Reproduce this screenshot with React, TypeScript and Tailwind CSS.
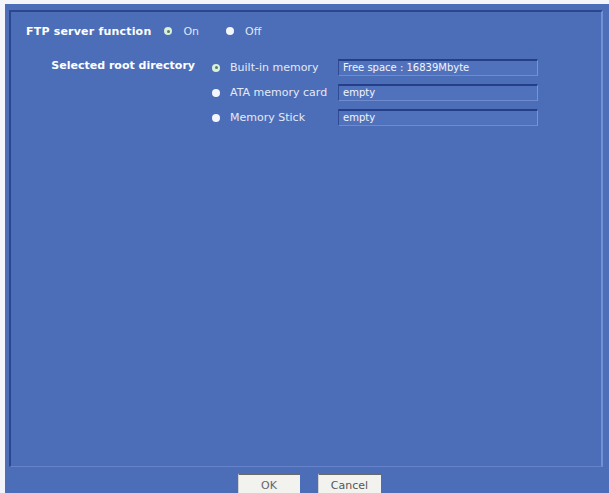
import { FC } from 'react';

type RadioProps = {
    checked?: boolean
}

// Small round option marker: a light ring when chosen, a plain white dot otherwise.
const Radio: FC<RadioProps> = ({ checked }) => (
    checked ? (
        <span className="flex items-center justify-center w-[8px] h-[8px] rounded-full bg-[#dcefd8] shrink-0">
            <span className="w-[3px] h-[3px] rounded-full bg-[#4f8268]" />
        </span>
    ) : (
        <span className="block w-[8px] h-[8px] rounded-full bg-[#f4f6fb] shrink-0" />
    )
);

type MemoryRowProps = {
    label: string,
    value: string,
    checked?: boolean
}

const MemoryRow: FC<MemoryRowProps> = ({ label, value, checked }) => (
    <div className="flex items-center h-[25px]">
        <Radio checked={checked} />
        <span className="ml-[10px] w-[108px] whitespace-nowrap text-[#e4e9f6]">{label}</span>
        <div className="w-[200px] h-[17px] flex items-center pl-[4px] bg-[#5072bd] border-t-2 border-l border-t-[#243f88] border-l-[#2f4b94] border-r border-b border-r-[#7a94d3] border-b-[#6f8acd] text-[10px] text-[#f2f5fc]">
            {value}
        </div>
    </div>
);

export default function App(): JSX.Element {
    return (
        <div
            className="w-[609px] h-[493px] overflow-hidden bg-[#f3f5fa] pt-[4px] pl-[5px] text-[11px] leading-none"
            style={{ fontFamily: '"DejaVu Sans", Verdana, sans-serif' }}
        >
            <div className="h-full bg-[#4c6eb9] pt-[6px] pl-[4px] pr-[6px] flex flex-col">
                <div className="h-[457px] shrink-0 border-t-2 border-l-2 border-t-[#2b468f] border-l-[#2b468f] border-r-2 border-b border-r-[#7290d6] border-b-[#6682c8] pt-[12px]">
                    <div className="flex items-center h-[14px] pl-[15px]">
                        <span className="font-bold text-white tracking-[0.2px]">FTP server function</span>
                        <span className="ml-[13px]"><Radio checked /></span>
                        <span className="ml-[11px] text-[#dfe6f5]">On</span>
                        <span className="ml-[27px]"><Radio /></span>
                        <span className="ml-[11px] text-[#dfe6f5]">Off</span>
                    </div>

                    <div className="flex items-start mt-[17px]">
                        <div className="w-[184px] text-right font-bold text-white mt-[5px]">Selected root directory</div>
                        <div className="flex flex-col ml-[17px]">
                            <MemoryRow label="Built-in memory" value="Free space : 16839Mbyte" checked />
                            <MemoryRow label="ATA memory card" value="empty" />
                            <MemoryRow label="Memory Stick" value="empty" />
                        </div>
                    </div>
                </div>

                <div className="flex justify-center gap-[18px] mt-[6px] pl-[6px]">
                    <button className="w-[62px] h-[22px] bg-[#f2f2ef] border-t-2 border-t-[#6a6a6a] border-l border-l-[#d0d0d0] text-[11px] text-[#666]">
                        OK
                    </button>
                    <button className="w-[63px] h-[22px] bg-[#f2f2ef] border-t-2 border-t-[#6a6a6a] border-l border-l-[#d0d0d0] text-[11px] text-[#555]">
                        Cancel
                    </button>
                </div>
            </div>
        </div>
    );
}
